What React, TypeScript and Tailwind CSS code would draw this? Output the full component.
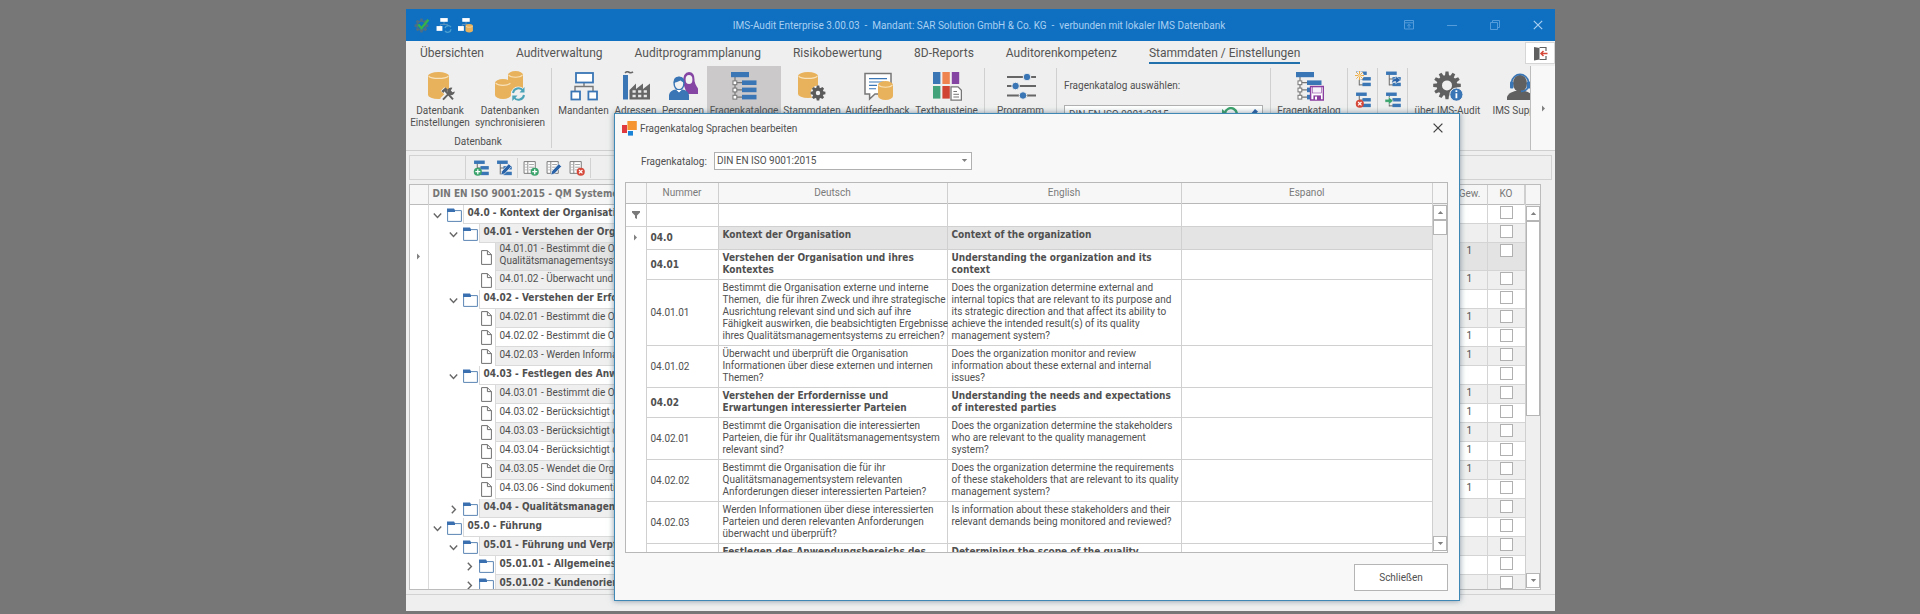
import React from "react";

const BLUE = "#3a76b5";
const BOLD = "font-['DejaVu_Sans_Condensed','DejaVu_Sans',sans-serif] font-bold";

/* ---------- icon parts ---------- */

const Svg = ({ size = 30, children }: { size?: number; children: React.ReactNode }) => (
  <svg width={size} height={size} viewBox="0 0 30 30" fill="none" className="block shrink-0" aria-hidden="true">
    {children}
  </svg>
);

const Cylinder = ({ x, y, w, h }: { x: number; y: number; w: number; h: number }) => (
  <g transform={`translate(${x} ${y})`}>
    <path d={`M0 4 A${w / 2} 4 0 0 1 ${w} 4 V${h - 4} A${w / 2} 4 0 0 1 0 ${h - 4} Z`} fill="#e8b25c" />
    <path d={`M0.6 4.2 A${w / 2} 3.4 0 0 0 ${w - 0.6} 4.2`} stroke="#f8e3bd" strokeWidth="1.2" />
  </g>
);

type GearProps = { cx: number; cy: number; r: number; hole: number; teeth?: number; color?: string };

const Gear = ({ cx, cy, r, hole, teeth = 8, color = "#5a5a5a" }: GearProps) => {
  const half = (r * 1.9) / teeth;
  return (
    <g transform={`translate(${cx} ${cy})`}>
      {Array.from({ length: teeth }, (_, i) => (
        <path
          key={i}
          transform={`rotate(${(i * 360) / teeth})`}
          d={`M${-half} ${-r * 0.6} L${-half * 0.7} ${-r} H${half * 0.7} L${half} ${-r * 0.6} Z`}
          fill={color}
        />
      ))}
      <circle r={(r * 0.76 + hole) / 2} stroke={color} strokeWidth={r * 0.76 - hole} />
    </g>
  );
};

/* Hierarchy with four bars, base of all catalogue icons */
const TreeBars = () => (
  <g>
    <path d="M6 6 V27 M6 11.7 H13 M6 18.9 H13 M6 26.1 H13" stroke="#777" strokeWidth="1.2" />
    <rect x="2" y="1" width="18" height="5.2" fill={BLUE} />
    {[9.4, 16.6, 23.8].map((y) => (
      <g key={y}>
        <rect x="4" y={y + 0.5} width="3.8" height="3.8" fill="#fff" stroke="#777" />
        <rect x="13" y={y} width="14.5" height="4.6" fill={BLUE} />
      </g>
    ))}
  </g>
);

const DbSettingsIcon = () => (
  <Svg>
    <Cylinder x={3} y={1} w={21} h={27} />
    <path d="M17 29 L29 17 M17.5 18 L28 28.5" stroke="#efefef" strokeWidth="5" />
    <path d="M18 28.6 L26 20.4 M20 19.6 L28 28.4" stroke="#606060" strokeWidth="2" />
    <path d="M16.4 20 L20.4 16.4 L22.8 18.6 L21.4 20.4 L19.8 20 L18.4 22 Z" fill="#606060" />
    <path d="M27.4 16.8 A3.8 3.8 0 1 0 29.8 20.4 L27.4 21.2 L25.8 19.4 Z" fill="#606060" />
  </Svg>
);

const DbSyncIcon = () => (
  <Svg>
    <Cylinder x={13} y={0} w={15} h={21} />
    <Cylinder x={0} y={8} w={16} h={20} />
    <circle cx="23.4" cy="23" r="7.6" fill="#efefef" />
    <path d="M18 22 A5.6 5.6 0 0 1 28 19.5 M29 24 A5.6 5.6 0 0 1 19 26.5" stroke="#4ba3b8" strokeWidth="2" />
    <path d="M29.5 16 V21.5 H24.5 Z M17.3 30 V24.5 H22.5 Z" fill="#4ba3b8" />
  </Svg>
);

const OrgIcon = () => (
  <Svg>
    <path d="M15 11 V15.5 M6 20 V15.5 H24 V20" stroke="#777" strokeWidth="1.4" />
    <g fill="#fff" stroke={BLUE} strokeWidth="1.8">
      <rect x="7" y="2" width="17" height="9.5" />
      <rect x="2.4" y="20.5" width="8.6" height="8" />
      <rect x="19.4" y="20.5" width="8.6" height="8" />
    </g>
  </Svg>
);

const FactoryIcon = () => (
  <Svg>
    <rect x="2" y="4" width="5" height="24.5" fill={BLUE} />
    <path d="M4 1.8 Q6 0 8 1.2 T12 .8" stroke="#666" strokeWidth="1.6" />
    <path d="M8.5 28.5 V19 L15 12.5 V18 L22 12.5 V18 L29 12.5 V28.5 Z" fill="#666" />
    <path d="M11.5 20.5 H26.5 M11.5 25 H26.5" stroke="#e8e8e8" strokeWidth="2.4" strokeDasharray="3.2 2.4" />
  </Svg>
);

const PeopleIcon = () => (
  <Svg>
    <path d="M15 12 Q15 1 21 1 Q27 1 26.5 10 Q27 13 29 16 Q31 18 30 23 H19 Z" fill="#8545a3" />
    <ellipse cx="21" cy="8.5" rx="3.4" ry="4.6" fill="#f2f2f2" />
    <path d="M1 29 V24 Q2 19 8 18.5 L11 21 L14 18.5 Q20 19 21 24 V29 Z" fill={BLUE} />
    <ellipse cx="11" cy="12.6" rx="4.9" ry="6.2" fill="#f2f2f2" stroke={BLUE} strokeWidth="1.4" />
    <path d="M5.6 12 Q5.4 5.6 11 5.6 Q16.6 5.6 16.4 12 Q14 10.5 12.5 9.5 Q9 11.4 5.6 12 Z" fill={BLUE} />
    <path d="M8.5 19 L11 21.5 L13.5 19 Z" fill="#fff" />
  </Svg>
);

const CatalogIcon = () => (
  <Svg>
    <TreeBars />
  </Svg>
);

const DbGearIcon = () => (
  <Svg>
    <Cylinder x={1} y={1} w={20} h={26} />
    <circle cx="21" cy="22" r="7.4" fill="#efefef" />
    <Gear cx={21} cy={22} r={7.4} hole={2.2} />
  </Svg>
);

const FeedbackIcon = () => (
  <Svg>
    <path d="M2 2.6 H28 V23 H12 L6.6 28 V23 H2 Z" fill="#fff" stroke="#777" strokeWidth="1.5" />
    <path d="M6 7.6 H24 M6 11 H21 M6 14.4 H14 M6 17.8 H13" stroke={BLUE} strokeWidth="1.1" />
    <Cylinder x={15} y={10} w={15} h={19} />
  </Svg>
);

const BlocksIcon = () => (
  <Svg>
    <rect x="1" y="1" width="7.4" height="12" fill={BLUE} />
    <rect x="10.4" y="1" width="7.4" height="12" fill="#ee8350" />
    <rect x="19.8" y="1" width="7.4" height="12" fill="#8545a3" />
    <rect x="1" y="15" width="7.4" height="12.6" fill="#44a27a" />
    <rect x="10.4" y="15" width="7.4" height="12.6" fill="#cf4432" />
    <path d="M19 15.8 H26 L29.4 19.4 V29.2 H19 Z" fill="#fff" stroke="#777" strokeWidth="1.3" />
    <path d="M21.4 20.5 H25 M21.4 23.3 H27 M21.4 26 H27" stroke="#777" />
  </Svg>
);

const SlidersIcon = () => (
  <Svg>
    <path d="M1 6 H30 M1 15 H30 M1 24.5 H30" stroke="#666" strokeWidth="2" />
    <g fill={BLUE} stroke="#efefef" strokeWidth="1">
      <circle cx="21" cy="6" r="3.8" />
      <circle cx="9.6" cy="15" r="3.8" />
      <circle cx="17" cy="24.5" r="3.8" />
    </g>
  </Svg>
);

const CatalogSaveIcon = () => (
  <Svg>
    <TreeBars />
    <path d="M16.6 15.6 H29.4 V29 H16.6 Z" fill="#fff" stroke="#8a3fa0" strokeWidth="1.5" />
    <rect x="18.6" y="16" width="9" height="6" fill="#f7f0fa" stroke="#8a3fa0" strokeWidth=".6" />
    <rect x="19.4" y="24.4" width="7.6" height="4.6" fill="#8a3fa0" />
    <rect x="21" y="25.6" width="2" height="3" fill="#fff" />
  </Svg>
);

const AboutIcon = () => (
  <Svg>
    <Gear cx={14} cy={14.4} r={13.8} hole={5} teeth={12} color="#606060" />
    <circle cx="23.4" cy="23.6" r="6.6" fill={BLUE} stroke="#efefef" />
    <path d="M23.4 22.2 V27.2 M23.4 19.2 V21" stroke="#fff" strokeWidth="1.8" />
  </Svg>
);

const SupportIcon = () => (
  <Svg>
    <path d="M2 29 V26 Q3 22 10 20 H20 Q27 22 28 26 V29 Z" fill="#606060" />
    <ellipse cx="15" cy="12.4" rx="7" ry="8.6" fill="#606060" />
    <path d="M6.6 14 V11 A8.6 9 0 0 1 23.6 11 V14 M23 16 Q22 20 16 20.4" stroke={BLUE} strokeWidth="1.6" />
    <rect x="5" y="10.6" width="3.4" height="7" rx="1" fill={BLUE} />
    <rect x="21.8" y="10.6" width="3.4" height="7" rx="1" fill={BLUE} />
  </Svg>
);

type Badge = "add" | "edit" | "delete" | "new" | "export" | "import";

const BadgeMark = ({ kind }: { kind: Badge }) => (
  <g>
    {kind === "add" && (
      <>
        <circle cx="9" cy="22" r="7.6" fill="#3ba36c" />
        <path d="M9 17.4 V26.6 M4.4 22 H13.6" stroke="#fff" strokeWidth="2.4" />
      </>
    )}
    {kind === "delete" && (
      <>
        <circle cx="9" cy="22" r="7.6" fill="#d5483a" />
        <path d="M5.8 18.8 L12.2 25.2 M12.2 18.8 L5.8 25.2" stroke="#fff" strokeWidth="2.2" />
      </>
    )}
    {kind === "edit" && <path d="M9 28 L11 21 L24 7 L29 12 L16 26 Z" fill="#2a62a8" stroke="#f4f4f4" strokeWidth="1.2" />}
    {kind === "new" && (
      <>
        <circle cx="8.5" cy="8.5" r="8" fill="#f2f2f2" />
        <path d="M8.5 0 V17 M0 8.5 H17 M2.6 2.6 L14.4 14.4 M14.4 2.6 L2.6 14.4" stroke="#e9a840" strokeWidth="1.8" />
        <circle cx="8.5" cy="8.5" r="3" fill="#f7d596" />
      </>
    )}
    {kind === "export" && <path d="M13 24 Q12 14 20 14 V9.5 L29.5 17 L20 24 V19.6 Q15 19 13 24 Z" fill="#2a62a8" stroke="#f4f4f4" />}
    {kind === "import" && <path d="M0 13.6 H6.5 V9 L15.5 16.5 L6.5 24 V19.4 H0 Z" fill="#3ba36c" stroke="#f4f4f4" />}
  </g>
);

const MiniTreeIcon = ({ badge }: { badge: Badge }) => (
  <Svg size={16}>
    <path d="M8 6 V27 M8 15 H15 M8 26 H15" stroke="#666" strokeWidth="1.8" />
    <rect x="2" y="1" width="20" height="6.4" fill={BLUE} />
    <rect x="14" y="11.4" width="15.6" height="6.4" fill={BLUE} />
    <rect x="14" y="22" width="15.6" height="6.4" fill={BLUE} />
    <BadgeMark kind={badge} />
  </Svg>
);

const MiniListIcon = ({ badge }: { badge: Badge }) => (
  <Svg size={16}>
    <path d="M2 3 H23 V25 H2 Z" fill="#fff" stroke="#777" strokeWidth="1.8" />
    <path d="M9 3 V25" stroke="#777" strokeWidth="1.6" />
    <path d="M4.4 8.5 H7 M4.4 13.5 H7 M4.4 18.5 H7 M11.5 8.5 H20.5 M11.5 13.5 H20.5 M11.5 18.5 H20.5" stroke="#888" strokeWidth="1.4" />
    <g transform={badge === "edit" ? undefined : "translate(13 0)"}>
      <BadgeMark kind={badge} />
    </g>
  </Svg>
);

const FolderIcon = () => (
  <svg width="15" height="14" viewBox="0 0 15 14" fill="none" aria-hidden="true">
    <path d="M.6 2.6 H14.4 V13.4 H.6 Z" fill="#fff" stroke="#5b86b5" />
    <path d="M0 .6 H7 L8 2.2 V4 H0 Z" fill="#3a70b0" />
  </svg>
);

const FileIcon = () => (
  <svg width="11" height="15" viewBox="0 0 11 15" fill="none" aria-hidden="true">
    <path d="M.6 .6 H6.4 L10.4 4.6 V14.4 H.6 Z M6.4 .6 V4.6 H10.4" fill="#fff" stroke="#707070" />
  </svg>
);

const Chevron = ({ open }: { open: boolean }) => (
  <svg width="9" height="9" viewBox="0 0 9 9" fill="none" aria-hidden="true">
    <path d={open ? "M.8 2.6 L4.5 6.4 L8.2 2.6" : "M2.8 .8 L6.4 4.5 L2.8 8.2"} stroke="#666" strokeWidth="1.4" />
  </svg>
);

const Arrow = ({ dir }: { dir: "up" | "down" | "right" }) => (
  <svg width="7" height="7" viewBox="0 0 7 7" aria-hidden="true">
    <path d={dir === "up" ? "M.8 5 L3.5 2 L6.2 5 Z" : dir === "down" ? "M.8 2 L3.5 5 L6.2 2 Z" : "M2 .4 L5 3.5 L2 6.6 Z"} fill="#808080" />
  </svg>
);

/* ---------- ribbon ---------- */

const TABS = ["Übersichten", "Auditverwaltung", "Auditprogrammplanung", "Risikobewertung", "8D-Reports", "Auditorenkompetenz", "Stammdaten / Einstellungen"];

const RibbonButton = ({ icon, label, className }: { icon: React.ReactNode; label: string; className: string }) => (
  <button type="button" className={`flex shrink-0 flex-col items-center gap-1 pt-[5px] text-center leading-3 whitespace-pre ${className}`}>
    {icon}
    {label}
  </button>
);

const Divider = () => <div className="mx-[3px] my-[2px] w-px shrink-0 bg-[#d0d0d0]" />;

const Ribbon = () => (
  <div className="flex h-[85px] shrink-0 overflow-hidden border-b border-[#cfcfcf]">
    <div className="flex min-w-0 flex-1 overflow-hidden pl-[2px]">
      <div className="flex shrink-0 flex-col justify-between pb-[2px]">
        <div className="flex">
          <RibbonButton icon={<DbSettingsIcon />} label={"Datenbank\nEinstellungen"} className="w-[64px]" />
          <RibbonButton icon={<DbSyncIcon />} label={"Datenbanken\nsynchronisieren"} className="w-[76px]" />
        </div>
        <div className="text-center leading-3">Datenbank</div>
      </div>
      <Divider />
      <RibbonButton icon={<OrgIcon />} label="Mandanten" className="w-[57px]" />
      <RibbonButton icon={<FactoryIcon />} label="Adressen" className="w-[47px]" />
      <RibbonButton icon={<PeopleIcon />} label="Personen" className="w-[48px]" />
      <RibbonButton icon={<CatalogIcon />} label="Fragenkataloge" className="w-[74px] bg-[#cbc9ca]" />
      <RibbonButton icon={<DbGearIcon />} label="Stammdaten" className="w-[62px]" />
      <RibbonButton icon={<FeedbackIcon />} label="Auditfeedback" className="w-[69px]" />
      <RibbonButton icon={<BlocksIcon />} label="Textbausteine" className="w-[69px]" />
      <Divider />
      <RibbonButton icon={<SlidersIcon />} label="Programm" className="w-[65px]" />
      <Divider />
      <div className="flex w-[207px] shrink-0 flex-col gap-[13px] pt-[14px] pl-1">
        <label htmlFor="catalog-main" className="leading-3">Fragenkatalog auswählen:</label>
        <div className="flex h-[18px] w-[199px] items-center border border-[#b0b0b0] bg-white pr-1">
          <select id="catalog-main" className="min-w-0 flex-1 appearance-none pl-1">
            <option>DIN EN ISO 9001:2015</option>
          </select>
          <svg width="36" height="14" viewBox="0 0 36 14" fill="none" aria-hidden="true">
            <path d="M3 6 A6 6 0 1 1 3.6 10" stroke="#3ba36c" strokeWidth="2.4" />
            <path d="M0 2 V8 H7 Z" fill="#3ba36c" />
            <path d="M26 13 L27.5 8.6 L33 2 L36 4.4 L30.4 11 Z" fill="#2a62a8" />
          </svg>
        </div>
      </div>
      <Divider />
      <RibbonButton icon={<CatalogSaveIcon />} label="Fragenkatalog" className="w-[70px]" />
      <Divider />
      <div className="flex w-[23px] shrink-0 flex-col items-center gap-[5px] pt-[5px]">
        <button type="button" aria-label="Neu"><MiniTreeIcon badge="new" /></button>
        <button type="button" aria-label="Löschen"><MiniTreeIcon badge="delete" /></button>
      </div>
      <Divider />
      <div className="flex w-[23px] shrink-0 flex-col items-center gap-[5px] pt-[5px]">
        <button type="button" aria-label="Exportieren"><MiniTreeIcon badge="export" /></button>
        <button type="button" aria-label="Importieren"><MiniTreeIcon badge="import" /></button>
      </div>
      <Divider />
      <RibbonButton icon={<AboutIcon />} label="über IMS-Audit" className="w-[73px]" />
      <RibbonButton icon={<SupportIcon />} label="IMS Support" className="w-[72px]" />
    </div>
    <button type="button" aria-label="Weiter" className="flex w-[25px] shrink-0 items-center justify-center border-l border-[#bdbdbd] bg-[#f8f8f8]">
      <Arrow dir="right" />
    </button>
  </div>
);

/* ---------- question tree ---------- */

type Node = { level: 0 | 1 | 2; text: string; kind: "open" | "closed" | "file"; selected?: boolean };

const NODES: Node[] = [
  { level: 0, kind: "open", text: "04.0 - Kontext der Organisation" },
  { level: 1, kind: "open", text: "04.01 - Verstehen der Organisation" },
  { level: 2, kind: "file", text: "04.01.01 - Bestimmt die Organisation\nQualitätsmanagementsystems", selected: true },
  { level: 2, kind: "file", text: "04.01.02 - Überwacht und überprüft" },
  { level: 1, kind: "open", text: "04.02 - Verstehen der Erfordernisse" },
  { level: 2, kind: "file", text: "04.02.01 - Bestimmt die Organisation" },
  { level: 2, kind: "file", text: "04.02.02 - Bestimmt die Organisation" },
  { level: 2, kind: "file", text: "04.02.03 - Werden Informationen" },
  { level: 1, kind: "open", text: "04.03 - Festlegen des Anwendungsbereichs" },
  { level: 2, kind: "file", text: "04.03.01 - Bestimmt die Organisation" },
  { level: 2, kind: "file", text: "04.03.02 - Berücksichtigt die" },
  { level: 2, kind: "file", text: "04.03.03 - Berücksichtigt die" },
  { level: 2, kind: "file", text: "04.03.04 - Berücksichtigt die" },
  { level: 2, kind: "file", text: "04.03.05 - Wendet die Organisation" },
  { level: 2, kind: "file", text: "04.03.06 - Sind dokumentierte" },
  { level: 1, kind: "closed", text: "04.04 - Qualitätsmanagementsystem" },
  { level: 0, kind: "open", text: "05.0 - Führung" },
  { level: 1, kind: "open", text: "05.01 - Führung und Verpflichtung" },
  { level: 2, kind: "closed", text: "05.01.01 - Allgemeines" },
  { level: 2, kind: "closed", text: "05.01.02 - Kundenorientierung" },
];

const INDENT = ["pl-1", "pl-5", "pl-9"];

const Scrollbar = ({ thumb }: { thumb: string }) => (
  <div className="flex min-h-0 flex-1 flex-col bg-[#efefef] pt-px">
    <button type="button" aria-label="Nach oben" className="flex h-[15px] shrink-0 items-center justify-center border border-[#b5b5b5] bg-white">
      <Arrow dir="up" />
    </button>
    <div className={`shrink-0 border border-[#b5b5b5] bg-white ${thumb}`} />
    <button type="button" aria-label="Nach unten" className="mt-auto flex h-[15px] shrink-0 items-center justify-center border border-[#b5b5b5] bg-white">
      <Arrow dir="down" />
    </button>
  </div>
);

const QuestionTree = () => (
  <div className="mr-[14px] ml-[3px] flex min-h-0 flex-1 overflow-hidden border border-[#bcbcbc] bg-white">
    <div className="min-w-0 flex-1 overflow-hidden">
      <table className="w-full table-fixed border-collapse">
        <thead>
          <tr className="h-[19px] border-b border-[#bcbcbc] bg-[#f6f6f6] text-[#777]">
            <th className="w-[18px] border-r border-[#cfcfcf]" />
            <th className={`border-r border-[#cfcfcf] py-0 pl-1 text-left leading-3 whitespace-nowrap ${BOLD}`}>DIN EN ISO 9001:2015 - QM Systeme</th>
            <th className="w-[36px] border-r border-[#cfcfcf] py-0 font-normal leading-3">Gew.</th>
            <th className="w-[37px] border-r border-[#cfcfcf] py-0 font-normal leading-3">KO</th>
          </tr>
        </thead>
        <tbody>
          {NODES.map((n, i) => {
            const shade = n.selected ? "bg-[#e3e3e3]" : i % 2 ? "bg-[#efefef]" : "bg-white";
            return (
              <tr key={n.text} className={n.selected ? "h-[28px]" : "h-[19px]"}>
                <td className="border-r border-[#dadada] p-0">
                  {n.selected && <span className="flex justify-center"><Arrow dir="right" /></span>}
                </td>
                <td className={`h-[inherit] overflow-hidden p-0 ${INDENT[n.level]}`}>
                  <div className="flex h-[inherit] items-stretch">
                    <span className="flex w-[13px] shrink-0 items-center pt-[2px]">{n.kind !== "file" && <Chevron open={n.kind === "open"} />}</span>
                    <span className="flex w-[17px] shrink-0 items-center justify-center pt-px">{n.kind === "file" ? <FileIcon /> : <FolderIcon />}</span>
                    <span className={`flex flex-1 items-center border-b border-l border-[#dadada] pb-[2px] pl-1 leading-3 whitespace-pre ${shade} ${n.kind === "file" ? "" : BOLD}`}>
                      {n.text}
                    </span>
                  </div>
                </td>
                <td className={`border-r border-b border-[#d4d4d4] p-0 pt-[2px] text-center align-top leading-3 ${shade}`}>{n.kind === "file" && "1"}</td>
                <td className={`border-b border-[#d4d4d4] p-0 pt-px align-top ${shade}`}>
                  <input type="checkbox" aria-label={`KO ${n.text}`} className="mx-auto block h-[13px] w-[13px] appearance-none border border-[#b0b0b0] bg-white" />
                </td>
              </tr>
            );
          })}
        </tbody>
      </table>
    </div>
    <div className="flex w-[15px] shrink-0 flex-col border-l border-[#cfcfcf] pb-px">
      <div className="h-[20px] shrink-0 border-b border-[#bcbcbc] bg-[#f6f6f6]" />
      <Scrollbar thumb="h-[51%]" />
    </div>
  </div>
);

/* ---------- language dialog ---------- */

type Entry = { no: string; de: string; en: string; bold?: boolean };

const ENTRIES: Entry[] = [
  { no: "04.0", bold: true, de: "Kontext der Organisation", en: "Context of the organization" },
  { no: "04.01", bold: true, de: "Verstehen der Organisation und ihres\nKontextes", en: "Understanding the organization and its\ncontext" },
  {
    no: "04.01.01",
    de: "Bestimmt die Organisation externe und interne\nThemen,  die für ihren Zweck und ihre strategische\nAusrichtung relevant sind und sich auf ihre\nFähigkeit auswirken, die beabsichtigten Ergebnisse\nihres Qualitätsmanagementsystems zu erreichen?",
    en: "Does the organization determine external and\ninternal topics that are relevant to its purpose and\nits strategic direction and that affect its ability to\nachieve the intended result(s) of its quality\nmanagement system?",
  },
  {
    no: "04.01.02",
    de: "Überwacht und überprüft die Organisation\nInformationen über diese externen und internen\nThemen?",
    en: "Does the organization monitor and review\ninformation about these external and internal\nissues?",
  },
  { no: "04.02", bold: true, de: "Verstehen der Erfordernisse und\nErwartungen interessierter Parteien", en: "Understanding the needs and expectations\nof interested parties" },
  {
    no: "04.02.01",
    de: "Bestimmt die Organisation die interessierten\nParteien, die für ihr Qualitätsmanagementsystem\nrelevant sind?",
    en: "Does the organization determine the stakeholders\nwho are relevant to the quality management\nsystem?",
  },
  {
    no: "04.02.02",
    de: "Bestimmt die Organisation die für ihr\nQualitätsmanagementsystem relevanten\nAnforderungen dieser interessierten Parteien?",
    en: "Does the organization determine the requirements\nof these stakeholders that are relevant to its quality\nmanagement system?",
  },
  {
    no: "04.02.03",
    de: "Werden Informationen über diese interessierten\nParteien und deren relevanten Anforderungen\nüberwacht und überprüft?",
    en: "Is information about these stakeholders and their\nrelevant demands being monitored and reviewed?",
  },
  { no: "04.03", bold: true, de: "Festlegen des Anwendungsbereichs des\nQualitätsmanagementsystems", en: "Determining the scope of the quality\nmanagement system" },
];

const LanguageDialog = () => (
  <div role="dialog" aria-label="Fragenkatalog Sprachen bearbeiten" className="absolute top-[104px] right-[95px] bottom-[10px] left-[208px] flex flex-col border border-[#3f87b5] bg-[#f8f8f8] shadow-[0_0_6px_rgba(60,90,110,0.6)]">
    <div className="flex h-[28px] shrink-0 items-center pr-4 pl-[7px]">
      <svg width="15" height="15" viewBox="0 0 15 15" aria-hidden="true">
        <rect x="0" y="4" width="5" height="8" fill="#e0393e" />
        <rect x="5.4" y="0" width="9.4" height="9" fill="#f59331" />
        <rect x="6" y="10" width="5" height="4.6" fill="#1c84d6" />
      </svg>
      <h2 className="ml-[3px] flex-1">Fragenkatalog Sprachen bearbeiten</h2>
      <button type="button" aria-label="Fenster schließen">
        <svg width="10" height="10" viewBox="0 0 10 10" fill="none"><path d="M.6 .6 L9.4 9.4 M9.4 .6 L.6 9.4" stroke="#444" strokeWidth="1.3" /></svg>
      </button>
    </div>

    <div className="flex items-center gap-[7px] pt-[10px] pb-[12px] pl-[26px]">
      <label htmlFor="catalog">Fragenkatalog:</label>
      <div className="relative">
        <select id="catalog" className="block h-[18px] w-[258px] appearance-none border border-[#b0b0b0] bg-white pl-[2px] leading-none">
          <option>DIN EN ISO 9001:2015</option>
        </select>
        <span className="pointer-events-none absolute top-[5px] right-1"><Arrow dir="down" /></span>
      </div>
    </div>

    <div className="mr-[11px] ml-[10px] flex min-h-0 flex-1 overflow-hidden border border-[#b8b8b8] bg-white">
      <div className="min-w-0 flex-1 overflow-hidden">
        <table className="w-full table-fixed border-collapse">
          <thead>
            <tr className="h-[20px] border-b border-[#b8b8b8] bg-[#f7f7f7] text-[#7a7a7a]">
              <th className="w-[20px] border-r border-[#cfcfcf]" />
              <th className="w-[72px] border-r border-[#cfcfcf] font-normal">Nummer</th>
              <th className="w-[229px] border-r border-[#cfcfcf] font-normal">Deutsch</th>
              <th className="w-[234px] border-r border-[#cfcfcf] font-normal">English</th>
              <th className="font-normal">Espanol</th>
            </tr>
          </thead>
          <tbody>
            <tr className="h-[23px] border-b border-[#d0d0d0]">
              <td className="border-r border-[#d0d0d0] p-0">
                <svg width="8" height="8" viewBox="0 0 8 8" className="mx-auto" aria-hidden="true"><path d="M0 0 H8 V1.4 L5 4.4 V8 L3 7 V4.4 L0 1.4 Z" fill="#7a7a7a" /></svg>
              </td>
              <td className="border-r border-[#d0d0d0]" />
              <td className="border-r border-[#d0d0d0]" />
              <td className="border-r border-[#d0d0d0]" />
              <td />
            </tr>
            {ENTRIES.map((e, i) => {
              const cell = `border-r border-b border-[#d0d0d0] pt-[2px] pr-0 pb-[3px] pl-1 align-top leading-3 whitespace-pre ${i === 0 ? "bg-[#e4e4e4]" : ""} ${e.bold ? BOLD : ""}`;
              return (
                <tr key={e.no} className="h-[23px]">
                  <td className="border-r border-[#d0d0d0] p-0">{i === 0 && <span className="flex justify-center"><Arrow dir="right" /></span>}</td>
                  <td className={`border-r border-b border-[#d0d0d0] py-0 pr-0 pl-1 align-middle ${e.bold ? BOLD : ""}`}>{i < 8 && e.no}</td>
                  <td className={cell}>{e.de}</td>
                  <td className={cell}>{e.en}</td>
                  <td className={`border-b border-[#d0d0d0] ${i === 0 ? "bg-[#e4e4e4]" : ""}`} />
                </tr>
              );
            })}
          </tbody>
        </table>
      </div>
      <div className="flex w-[15px] shrink-0 flex-col border-l border-[#cfcfcf] pb-px">
        <div className="h-[21px] shrink-0 border-b border-[#b8b8b8] bg-[#f7f7f7]" />
        <Scrollbar thumb="h-[15px]" />
      </div>
    </div>

    <div className="flex shrink-0 justify-end pt-[11px] pr-[11px] pb-[9px]">
      <button type="button" className="h-[27px] w-[94px] border border-[#b5b5b5] bg-white">Schließen</button>
    </div>
  </div>
);

/* ---------- window ---------- */

const TitleBar = () => (
  <header className="flex h-[32px] shrink-0 items-center bg-[#0f6fc0] pr-3 pl-2 text-[#a9d0f2]">
    <div className="flex items-center gap-[6px]">
      <Svg size={16}>
        <Gear cx={14} cy={16} r={13} hole={7} color="#4c6f86" />
        <path d="M8 14 L14 21 L27 5" stroke="#35b34a" strokeWidth="4.4" />
      </Svg>
      <Svg size={16}>
        <path d="M15 8 V15 M8 18 V14 H22 V18" stroke="#5d92bd" strokeWidth="1.8" />
        <rect x="8" y="2" width="14" height="7" fill="#fff" />
        <rect x="1" y="17" width="11" height="9" fill="#fff" />
        <path d="M17 21 A6 6 0 0 1 28 19 M28 23 A6 6 0 0 1 17 26" stroke="#4a9fd0" strokeWidth="2.6" />
      </Svg>
      <Svg size={16}>
        <path d="M15 8 V15 M8 18 V14 H22 V18" stroke="#5d92bd" strokeWidth="1.8" />
        <rect x="8" y="2" width="14" height="7" fill="#fff" />
        <rect x="0" y="17" width="11" height="9" fill="#fff" />
        <Cylinder x={14} y={13} w={14} h={16} />
      </Svg>
    </div>
    <h1 className="flex-1 pl-[80px] text-center whitespace-pre">IMS-Audit Enterprise 3.00.03  -  Mandant: SAR Solution GmbH &amp; Co. KG  -  verbunden mit lokaler IMS Datenbank</h1>
    <div className="flex items-center gap-[33px] text-[#559cdb]">
      <button type="button" aria-label="Menüband">
        <svg width="10" height="10" viewBox="0 0 10 10" fill="none" stroke="currentColor"><path d="M.5 .5 H9.5 V9 H.5 Z M.5 2.8 H9.5 M5 8 V4.6 M3.2 6 L5 4.4 L6.8 6" /></svg>
      </button>
      <button type="button" aria-label="Minimieren">
        <svg width="10" height="10" viewBox="0 0 10 10" fill="none" stroke="currentColor"><path d="M0 5.5 H10" /></svg>
      </button>
      <button type="button" aria-label="Wiederherstellen">
        <svg width="10" height="10" viewBox="0 0 10 10" fill="none" stroke="currentColor"><path d="M.5 2.5 H7.5 V9.5 H.5 Z M2.5 2.5 V.5 H9.5 V7.5 H7.5" /></svg>
      </button>
      <button type="button" aria-label="Beenden" className="text-[#a9d0f2]">
        <svg width="10" height="10" viewBox="0 0 10 10" fill="none" stroke="currentColor" strokeWidth="1.2"><path d="M.8 .8 L9.2 9.2 M9.2 .8 L.8 9.2" /></svg>
      </button>
    </div>
  </header>
);

const App = () => {
  return (
    <main className="flex h-screen flex-col bg-[#777777] pt-[9px] pr-[365px] pb-[3px] pl-[406px] font-['Roboto',sans-serif] text-[10px] text-[#505050]">
      <div className="relative flex min-h-0 flex-1 flex-col overflow-hidden bg-[#efefef]">
        <TitleBar />

        <nav className="flex h-[25px] shrink-0 items-start">
          <div className="flex flex-1 gap-[32px] pl-[14px] text-[12px] leading-[18px] text-[#555]">
            {TABS.map((t, i) => (
              <a key={t} href="#" className={`pt-[3px] whitespace-nowrap ${i === TABS.length - 1 ? "border-b-2 border-[#2270ac]" : ""}`}>
                {t}
              </a>
            ))}
          </div>
          <button type="button" aria-label="Abmelden" className="mt-px flex h-[22px] w-[30px] items-center justify-center border border-[#d6d6d6] bg-white">
            <Svg size={15}>
              <path d="M2 2 L13 4 V27 L2 29 Z" fill="#606060" />
              <path d="M13 3 H26 V10 M26 20 V27 H13" stroke="#606060" strokeWidth="2.4" />
              <path d="M29 15 H17 M21 10 L16 15 L21 20" stroke="#d5483a" strokeWidth="3" />
            </Svg>
          </button>
        </nav>

        <Ribbon />

        <div className="mx-[3px] my-1 flex h-[25px] shrink-0 items-center border border-[#d2d2d2]">
          <div className="h-full w-[56px] border-r border-[#d2d2d2]" />
          <div className="flex h-[20px] items-center gap-[7px] border-r border-[#d2d2d2] pr-[5px] pl-[7px]">
            <button type="button" aria-label="Frage hinzufügen"><MiniTreeIcon badge="add" /></button>
            <button type="button" aria-label="Frage bearbeiten"><MiniTreeIcon badge="edit" /></button>
          </div>
          <div className="flex h-[20px] items-center gap-[7px] border-r border-[#d2d2d2] px-[5px]">
            <button type="button" aria-label="Katalog hinzufügen"><MiniListIcon badge="add" /></button>
            <button type="button" aria-label="Katalog bearbeiten"><MiniListIcon badge="edit" /></button>
            <button type="button" aria-label="Katalog löschen"><MiniListIcon badge="delete" /></button>
          </div>
        </div>

        <QuestionTree />

        <footer className="mt-[4px] h-[17px] shrink-0 border-t border-[#d2d2d2]" />

        <LanguageDialog />
      </div>
    </main>
  );
};

export default App;
